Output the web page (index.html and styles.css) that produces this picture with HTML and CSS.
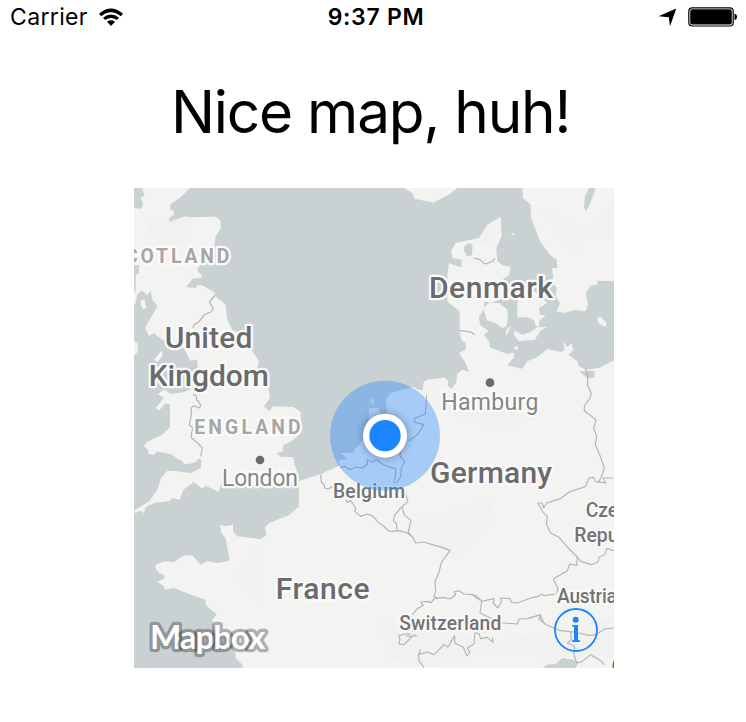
FILE: index.html
```html
<!DOCTYPE html>
<html lang="en">
<head>
<meta charset="utf-8">
<title>Map</title>
<link rel="stylesheet" href="styles.css">
</head>
<body>
<header class="status">
  <div class="status-left">
    <span class="carrier">Carrier</span>
    <svg class="wifi" width="26" height="20" viewBox="0 0 26 20"><path d="M1 6.7Q13-3.7 25 6.7L22.8 9.3Q13 1 3.2 9.3Z"/><path d="M5 10.7Q13 4.4 21 10.7L18.8 13.1Q13 8.7 7.2 13.1Z"/><path d="M9 14.7Q13 11.8 17 14.7L13 19Z"/></svg>
  </div>
  <span class="clock">9:37 PM</span>
  <div class="status-right">
    <svg width="19" height="19" viewBox="0 0 19 19"><path d="M18.3.5L12 18.2L10.8 9.2L.5 8.3Z"/></svg>
    <svg width="50" height="20" viewBox="0 0 50 20"><rect x=".8" y=".8" width="44.4" height="18.2" rx="3.4" fill="none" stroke="#000" stroke-width="1.2"/><rect x="2.2" y="2.2" width="41.6" height="15.4" rx="2"/><path d="M46.5 6.4q2.6.8 2.6 3.4t-2.6 3.4z"/></svg>
  </div>
</header>
<main>
  <h1>Nice map, huh!</h1>
  <svg class="map" viewBox="0 0 1440 1440">
    <g class="land">
      <path d="M25 0H167L140 28 110 48 108 65 120 68 118 82 105 90 106 102 152 85 165 88 245 86 260 98V122L245 145 237 195 190 240 192 252 205 262 200 270 175 272 157 298 185 300 190 292 205 292 240 312 250 330 274 348 280 395 295 425 340 450 355 490 375 520 370 540 400 580 408 630 390 655 405 670 418 655 478 657 500 672 502 720 495 740 470 762 448 770 447 790 428 795 440 806 478 808 482 830 490 850 480 880 400 890 300 893 285 885 262 882 255 912 215 893 205 902 180 882 148 905 137 935 115 930 105 940 60 945 35 958 30 976 20 968 0 975V968L45 940 70 905 80 872 98 850 115 848 170 855 200 840 203 815 195 811 185 822 168 827 150 828 145 820 130 812 115 800 70 790 60 800 42 797 43 785 30 775 38 762 85 740 108 718V650L95 645 75 668 65 660 90 630 72 618 90 604 110 618 150 612 180 600 192 560 190 515 168 518 150 480 85 455 60 435 45 445 33 420 50 390 70 355 55 335 50 308 40 322 25 308 10 318 5 345 0 350V312L5 310 5 262 15 255V232L0 230V60L20 62 28 50 20 30 31 24Z"/>
      <path d="M22 334L33 338 36 360 28 364 20 352ZM0 458L10 465 12 490 0 505ZM60 515L82 488 87 500 72 522Z"/>
      <path d="M810 0L835 15 842 32 900 44 920 32 945 20 970 0Z"/>
      <path d="M1165 0L1167 30 1190 50V85L1203 120 1218 160 1248 200 1268 215 1270 240 1254 240 1258 270 1248 275 1268 300 1265 325 1278 345 1268 370 1290 375 1320 366 1355 370 1362 350 1355 315 1370 293 1390 290V278L1440 280V0Z"/>
      <path d="M1047 360L1065 345 1095 345 1120 365 1122 390 1117 415 1105 420 1085 405 1060 398ZM1150 345L1160 325 1200 310 1215 320 1240 345 1215 360 1218 380 1235 382 1215 400 1216 415 1205 415 1200 395 1180 388 1150 388ZM1140 427L1165 440 1190 432 1210 418 1239 417 1220 428 1202 455 1155 460 1140 442ZM1140 476L1150 475 1153 483 1145 487ZM1115 430L1130 410 1122 435 1117 442ZM1390 390L1400 387 1418 405 1414 417 1392 405ZM1130 137L1143 135 1138 143Z"/>
      <path d="M1100 87L1103 145 1087 180 1090 220 1105 232 1130 237 1125 262 1105 275 1108 330 1070 345 1052 340 1047 370 1035 385 1038 410 1065 430 1050 440 1065 460 1068 478 1120 498 1140 494V508L1120 532 1165 542 1180 520 1210 508 1240 483 1280 492 1292 485 1288 460 1300 478 1312 465 1318 485 1303 500 1330 520 1335 535 1355 545 1395 540 1440 517V1440H328L325 1430 305 1410V1395L270 1340 240 1320 235 1295 248 1280 215 1250V1235L165 1218 120 1200 92 1205 90 1195 70 1182 92 1170 90 1160 75 1155 63 1140 65 1130 92 1120 120 1122 150 1102 175 1102 200 1130 220 1120 250 1125 287 1119 275 1050 262 1035 258 1010 275 1015 297 1010V1030L310 1045 380 1053 397 1040 393 1018 405 1005 465 982 495 955V880L560 858 620 832 612 818 640 813 620 795 655 795 690 750 703 720 706 661 733 659 738 676 758 676 756 636 768 616 838 596 853 606 867 606 868 585 877 575 933 569 943 580 941 592 953 602 967 583 969 558 985 545 1005 552 995 525 975 495 995 485V465L982 455 977 430V370L945 345 940 340V260L945 225 970 235 983 237V215L955 210 951 190 965 165 1010 155 1035 150 1060 110 1085 95ZM711 637L720 630 718 649 711 645Z"/>
    </g>
    <g class="terrain"><path d="M390 1050V1260L300 1170ZM1000 160L1080 120 1060 170ZM880 600L1200 690 1110 730 950 680ZM740 1300L1100 1360 1440 1290V1410L1000 1400 900 1440 760 1410ZM30 90L180 90 150 160 60 170ZM1220 60L1440 160V30L1320 200ZM840 1000L1080 930 1060 1030 950 1110Z"/></g>
    <g class="water"><path d="M990 175L1005 165 1016 172 1014 202 1000 205 990 190ZM1365 0H1385L1375 30 1357 70 1350 60 1353 25ZM1335 550L1382 548 1380 570 1360 570ZM1010 1216L1028 1221 1045 1236 1030 1234ZM812 1342L845 1338 852 1346 825 1349ZM1225 1440L1240 1430 1265 1428 1285 1410 1320 1415 1332 1425 1325 1440Z"/></g>
    <g class="borders">
      <path d="M244 321L226 342 238 361 232 371 211 380 198 398 180 411 177 420M177 619L187 624 188 637 194 640 200 653 196 660 180 653 172 660V678L166 712 177 720 172 738V750L190 764 205 780 200 805"/>
      <path d="M1020 210L1038 215 1047 224 1056 228 1078 218 1082 210M976 427L1010 432 1022 440M1355 542L1361 565V592L1372 617 1367 632 1351 654V668L1386 695 1379 720 1388 745 1384 770 1397 800 1411 840 1404 862 1393 885M878 620L874 678 844 690 840 702 870 710 850 740 824 758"/>
      <path d="M560 860L562 882 570 890 572 900 583 903 595 895M618 840L632 835 648 845 665 837 685 840 700 828V815L712 823 728 815 745 828 760 835 785 842V860L780 885M635 935L640 943 650 938 665 960 662 970 680 985 700 978 718 985 730 1000 755 1020 765 1030 795 1028 820 1035 828 1042"/>
      <g transform="translate(720 720)">
        <path d="M82 60L78 82 92 102 82 120 80 145 68 165M92 190L102 220 80 240 63 260 58 278 68 288V305M85 238L90 260 111 277 103 312M101 312L118 330 125 345 150 342 175 350 204 358 228 367 203 402 194 435 183 461 185 490 180 505 190 510M490 225L505 225 509 240 518 225 560 212 585 192 635 175 645 150 658 148 664 160 695 165 687 150 718 150M492 225L505 250 520 266 517 288 530 315 555 328 583 360 610 387 620 400 653 410 672 402 675 388 692 380 698 362 720 368M610 387L608 412 587 408 580 428 538 453 552 482 548 495"/>
        <path d="M115 560L130 542 148 532 140 522 160 520 172 524 180 512 210 508 228 513 245 500 240 492 255 488 270 498 295 500 323 520 360 512 358 525 371 540 382 522 380 510 408 512 412 523 430 525 470 510 492 505 502 498 510 503 545 498M323 520L318 555 335 563 385 585 430 588 435 573 460 572 500 560 495 573 517 590 560 608 600 612 645 622 665 620 692 603 720 600M500 565L510 585M115 625L90 650 74 648 78 635 75 622 95 618 108 617M140 665L133 680 160 672 180 680 210 650 222 657 242 623V645L268 658 279 684 288 673 280 660 300 648 303 615 315 617 320 632 340 628 357 643 355 628M133 680L136 700 150 718M590 612L592 635 580 645 602 655 600 680 608 705 625 700 650 680 680 698 690 710"/>
      </g>
    </g>
    <g class="country">
      <text x="92" y="481" textLength="263">United</text>
      <text x="44" y="594" textLength="361">Kingdom</text>
      <text x="885" y="331" textLength="372">Denmark</text>
      <text x="888" y="886" textLength="366">Germany</text>
      <text x="425" y="1234" textLength="282">France</text>
      <text x="1431" y="1466">C</text>
    </g>
    <g class="country small">
      <text x="597" y="929" textLength="216">Belgium</text>
      <text x="1355" y="988">Cze</text>
      <text x="1321" y="1061">Repu</text>
      <text x="1269" y="1246" textLength="180">Austria</text>
      <text x="796" y="1327" textLength="306">Switzerland</text>
    </g>
    <g class="region">
      <text x="-27" y="224" textLength="313">COTLAND</text>
      <text x="181" y="738" textLength="319">ENGLAND</text>
    </g>
    <g class="city">
      <text x="264" y="895" textLength="228">London</text>
      <text x="922" y="665" textLength="291">Hamburg</text>
      <circle cx="378" cy="816" r="13"/>
      <circle cx="1068" cy="584" r="13"/>
    </g>
    <circle class="accuracy" cx="753" cy="743" r="165"/>
    <circle class="puck" cx="753" cy="743" r="66"/>
    <circle class="puck-dot" cx="753" cy="743" r="47"/>
    <text class="logo" x="48" y="1382" textLength="346">Mapbox</text>
    <g class="info">
      <circle class="ring" cx="1326" cy="1326" r="63"/>
      <circle cx="1325" cy="1295" r="9"/>
      <path d="M1315 1311H1332V1357H1338V1362H1314V1357H1320V1316H1315Z"/>
    </g>
  </svg>
</main>
</body>
</html>
```
FILE: styles.css
```css
* { box-sizing: border-box; }
body {
  margin: 0;
  height: 722px;
  background: #fff;
  color: #000;
  font-family: Inter, "Liberation Sans", sans-serif;
  overflow: hidden;
}
.status {
  display: grid;
  grid-template-columns: 1fr auto 1fr;
  align-items: center;
  height: 34px;
  padding: 0 8px 0 10px;
  font-size: 23px;
  line-height: 34px;
}
.status svg { display: block; }
.status-left, .status-right { display: flex; align-items: center; }
.status-left { gap: 10px; }
.carrier { letter-spacing: .35px; }
.status-right { justify-content: flex-end; gap: 11px; }
.clock { font-weight: 600; letter-spacing: .7px; margin-left: 4px; }
main { display: flex; flex-direction: column; align-items: center; }
h1 {
  margin: 43px 0 0;
  height: 111px;
  font-size: 58.5px;
  font-weight: 400;
  line-height: 70px;
  letter-spacing: -1.2px;
  margin-right: 5px;
  white-space: nowrap;
}
.map { display: block; width: 480px; height: 480px; margin-left: 2px; background: #c9d1d3; overflow: hidden; }
.land { fill: #f3f3f2; }
.terrain { fill: #e8e8e7; opacity: .14; }
.water { fill: #c9d1d3; }
.borders { fill: none; stroke: #b4b4b4; stroke-width: 3.5; stroke-linejoin: round; }
.map text {
  font-family: Roboto, sans-serif;
  paint-order: stroke;
  stroke: #fafafa;
  stroke-width: 14px;
  stroke-linejoin: round;
}
.country { fill: #6b6b6b; font-size: 90px; font-weight: 500; }
.country.small { font-size: 58px; fill: #737373; }
.map .small text { stroke-width: 10px; }
.region { fill: #a6a6a6; font-size: 58px; font-weight: 700; }
.city { fill: #858585; font-size: 69px; }
.city circle { fill: #6b6b6b; }
.accuracy { fill: #1e84ff; fill-opacity: .36; }
.puck { fill: #fff; filter: drop-shadow(0 0 12px rgba(0, 0, 0, .35)); }
.puck-dot { fill: #1d84ff; }
.map .logo {
  font-family: Lato, sans-serif;
  font-size: 100px;
  font-weight: 700;
  fill: #fff;
  stroke: rgba(0, 0, 0, .28);
  stroke-width: 20px;
}
.info { fill: #1d84ff; }
.info .ring { fill: none; stroke: #1d84ff; stroke-width: 5.5; }
```
